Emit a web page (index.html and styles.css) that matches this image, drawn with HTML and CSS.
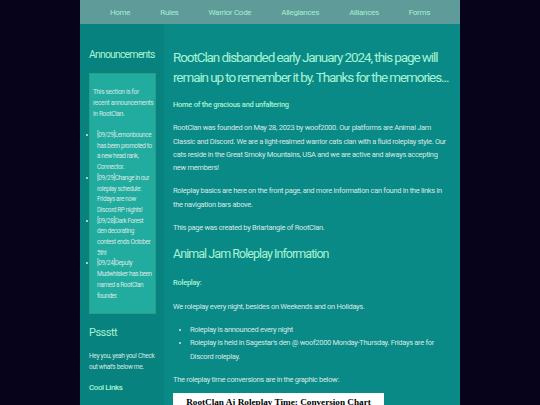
FILE: index.html
```html
<!DOCTYPE html>
<html>
<head>
	<title>RootClan</title>
	<meta charset="UTF-8">
	<link rel="stylesheet" href="styles.css">
</head>
<body>
	<div class="pagina">
		<div class="menu">
			<a href="#">Home</a>
			<a href="#">Rules</a>
			<a href="#">Warrior Code</a>
			<a href="#">Allegiances</a>
			<a href="#">Alliances</a>
			<a href="#">Forms</a>
		</div>

		<div class="colunas">
			<div class="lateral">
				<h2>Announcements</h2>
				<div class="avisos">
					<p>This section is for recent announcements in RootClan.</p>
					<ul>
						<li>[09/29]Lemonbounce has been promoted to a new head rank, Connector.</li>
						<li>[09/29]Change in our roleplay schedule: Fridays are now Discord RP nights!</li>
						<li>[09/28]Dark Forest den decorating contest ends October 5th!</li>
						<li>[09/24]Deputy Mudwhisker has been named a RootClan founder.</li>
					</ul>
				</div>

				<h2 class="psst">Pssstt</h2>
				<p>Hey you, yeah you! Check out what's below me.</p>
				<h4>Cool Links</h4>
			</div>

			<div class="principal">
				<h1>RootClan disbanded early January 2024, this page will remain up to remember it by. Thanks for the memories...</h1>
				<h4>Home of the gracious and unfaltering</h4>
				<p>RootClan was founded on May 28, 2023 by woof2000. Our platforms are Animal Jam Classic and Discord. We are a light-realmed warrior cats clan with a fluid roleplay style. Our cats reside in the Great Smoky Mountains, USA and we are active and always accepting new members!</p>
				<p>Roleplay basics are here on the front page, and more information can found in the links in the navigation bars above.</p>
				<p>This page was created by Briartangle of RootClan.</p>

				<h2>Animal Jam Roleplay Information</h2>
				<h4>Roleplay:</h4>
				<p>We roleplay every night, besides on Weekends and on Holidays.</p>
				<ul>
					<li>Roleplay is announced every night</li>
					<li>Roleplay is held in Sagestar's den @ woof2000 Monday-Thursday. Fridays are for Discord roleplay.</li>
				</ul>
				<p>The roleplay time conversions are in the graphic below:</p>
				<div class="grafico">RootClan Aj Roleplay Time: Conversion Chart</div>
			</div>
		</div>
	</div>
</body>
</html>
```

FILE: styles.css
```css
body{
	margin: 0;
	background: #06031a;
	font-family: Roboto, "Liberation Sans", sans-serif;
	color: #d6e9e4;
}

.pagina{
	width: 380px;
	margin: 0 auto;
}

.menu{
	height: 24px;
	background: #5f9b98;
	display: flex;
	justify-content: center;
	align-items: center;
	gap: 30px;
}

.menu a{
	color: #a4f0d2;
	font-size: 8px;
	letter-spacing: -0.3px;
	text-decoration: none;
}

.colunas{
	display: flex;
	align-items: stretch;
}

.lateral{
	width: 67px;
	flex-shrink: 0;
	padding: 9px 8px 0 9px;
	background: #07827e;
}

.principal{
	flex: 1;
	padding: 9px 9px 0 9px;
	background: #0a8a87;
}

h1, h2, h4{
	color: #a6f3d2;
	font-weight: normal;
}

.lateral h2{
	font-size: 10.5px;
	line-height: 16px;
	letter-spacing: -0.85px;
	margin: 14px 0 10px 0;
}

.lateral .psst{
	font-size: 11px;
	letter-spacing: -0.5px;
	margin: 11px 0 10px 0;
}

.avisos{
	background: #22ac9f;
	border: 1px solid #2a9f80;
	padding: 3px 1px 3px 3px;
	font-size: 6.4px;
	line-height: 10.7px;
	letter-spacing: -0.38px;
}

.avisos p{
	margin: 8px 0;
	letter-spacing: -0.5px;
}

.avisos ul{
	margin: 0 1px 9px 0;
	padding-left: 4px;
}

.lateral p{
	font-size: 6.5px;
	line-height: 11px;
	letter-spacing: -0.3px;
	margin: 10px 0;
}

.lateral h4{
	font-size: 8px;
	letter-spacing: -0.4px;
	font-weight: 500;
	margin: 10px 0;
}

.principal h1{
	font-size: 13.5px;
	line-height: 20px;
	letter-spacing: -1.1px;
	margin: 14px 0 11px 0;
}

.principal h2{
	font-size: 12.5px;
	line-height: 18px;
	letter-spacing: -0.95px;
	margin: 11px 0 13px 0;
}

.principal h4{
	font-size: 7.5px;
	line-height: 13.3px;
	letter-spacing: -0.25px;
	font-weight: 500;
	margin: 0 0 10px 0;
}

.principal p, .principal ul{
	font-size: 7.5px;
	line-height: 13.3px;
	letter-spacing: -0.3px;
	margin: 10px 0;
}

.principal ul{
	padding-left: 17px;
}

.grafico{
	width: 211px;
	height: 40px;
	margin-top: -3px;
	background: #ffffff;
	color: #000000;
	font-family: "Liberation Serif", serif;
	font-weight: bold;
	font-size: 9.2px;
	text-align: center;
	padding-top: 4px;
}
```
